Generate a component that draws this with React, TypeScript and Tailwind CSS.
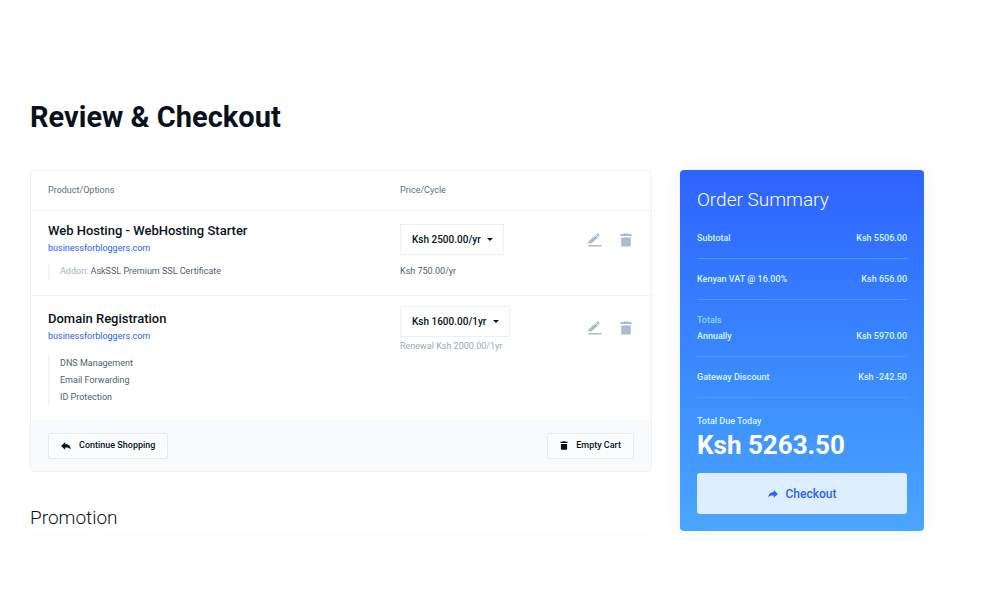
import type { ReactNode } from 'react';

interface PriceSelectProps {
  label: string;
  price: string;
}

interface SummaryRowProps {
  label: string;
  amount: string;
  caption?: string;
}

function TrashIcon({ className }: { className: string }) {
  return (
    <svg viewBox="0 0 12 14" fill="currentColor" className={className} aria-hidden="true">
      <path d="M4 0.4h4l0.6 0.7h2.9v2H0.5v-2h2.9zM1.2 4.6h9.6v8.2q0 0.7-0.7 0.7H1.9q-0.7 0-0.7-0.7z" />
    </svg>
  );
}

function PencilIcon() {
  return (
    <svg viewBox="0 0 14 14" fill="currentColor" className="size-3.5" aria-hidden="true">
      <path d="M7.6 2.2 10.1 4.6 3.4 10.6H0.3V8.5z" />
      <path d="M8.2 1.6 9.4 0.6q0.4-0.4 0.8 0l1.2 1.2q0.4 0.4 0 0.8l-0.8 1.4z" />
      <path d="M0.3 12h13.3v1.5H0.3z" />
    </svg>
  );
}

function ReplyIcon({ className = '' }: { className?: string }) {
  return (
    <svg viewBox="0 0 10 8" fill="currentColor" className={`h-2 w-2.5 ${className}`} aria-hidden="true">
      <path d="M4.2 0.1v1.8C7.9 2.1 9.6 3.9 9.7 7.4 8.5 5.9 7 5.6 4.2 5.6v2.2L0.1 3.9z" />
    </svg>
  );
}

function PriceSelect({ label, price }: PriceSelectProps) {
  return (
    <div className="relative w-fit">
      <select
        aria-label={label}
        className="block h-[31px] appearance-none border border-[#e9eff2] bg-white pr-[22px] pl-[11px] text-[10px] font-medium text-[#08121c]"
      >
        <option>{price}</option>
      </select>
      <svg
        viewBox="0 0 6 3"
        fill="currentColor"
        className="pointer-events-none absolute top-3.5 right-[11px] h-[3px] w-1.5"
        aria-hidden="true"
      >
        <path d="M0 0h6L3 3z" />
      </svg>
    </div>
  );
}

function RowActions({ name }: { name: string }) {
  return (
    <div className="flex items-center justify-end gap-[18px] text-[#a9bbce]">
      <button type="button" aria-label={`Edit ${name}`}>
        <PencilIcon />
      </button>
      <button type="button" aria-label={`Remove ${name}`}>
        <TrashIcon className="h-3.5 w-3" />
      </button>
    </div>
  );
}

function FooterButton({ icon, children }: { icon: ReactNode; children: ReactNode }) {
  return (
    <button
      type="button"
      className="flex h-[26px] items-center gap-2 rounded-xs border border-[#e6ebef] bg-[#fbfcfd] px-3 text-[9px] font-medium"
    >
      {icon}
      {children}
    </button>
  );
}

function SummaryRow({ label, amount, caption }: SummaryRowProps) {
  return (
    <div className="border-b border-[#5396ff] py-3">
      {caption && <p className="leading-4 text-[#8fd4ff]">{caption}</p>}
      <div className="flex justify-between leading-4">
        <span>{label}</span>
        <span>{amount}</span>
      </div>
    </div>
  );
}

export default function App() {
  return (
    <div className="min-h-screen bg-white pt-[99px] pr-[77px] pb-16 pl-[30px] font-['Roboto',sans-serif] text-[#08121c]">
      <h1 className="text-[29px] leading-9 font-bold">Review &amp; Checkout</h1>

      <div className="mt-[35px] flex items-start gap-7">
        <main className="min-w-0 flex-1">
          <div className="overflow-hidden rounded border border-[#edf1f3]">
            <table className="w-full table-fixed text-left">
              <thead>
                <tr className="h-[39px] border-b border-[#edf1f3] text-[9px] text-[#5c6f7b]">
                  <th className="pl-[17px] font-normal">Product/Options</th>
                  <th className="w-[164px] font-normal">Price/Cycle</th>
                  <th className="w-[87px]" aria-label="Actions" />
                </tr>
              </thead>
              <tbody className="align-top">
                <tr className="border-b border-[#f1f4f6]">
                  <td className="pt-3 pb-4 pl-[17px]">
                    <h2 className="text-[13px] leading-4 font-medium">Web Hosting - WebHosting Starter</h2>
                    <a href="#" className="block text-[9px] leading-[18px] text-[#1f5cff]">
                      businessforbloggers.com
                    </a>
                    <ul className="mt-1.5 border-l border-[#e9eff2] pl-[11px] text-[9px] leading-4 text-[#4f616d]">
                      <li>
                        <span className="text-[#a3b5bd]">Addon:</span> AskSSL Premium SSL Certificate
                      </li>
                    </ul>
                  </td>
                  <td className="pt-[13px]">
                    <PriceSelect label="Web Hosting billing cycle" price="Ksh 2500.00/yr" />
                    <p className="mt-2 text-[9px] leading-4 text-[#4f616d]">Ksh 750.00/yr</p>
                  </td>
                  <td className="pt-[22px] pr-[19px]">
                    <RowActions name="Web Hosting" />
                  </td>
                </tr>
                <tr>
                  <td className="pt-[15px] pb-3.5 pl-[17px]">
                    <h2 className="text-[13px] leading-4 font-medium">Domain Registration</h2>
                    <a href="#" className="block text-[9px] leading-[18px] text-[#1f5cff]">
                      businessforbloggers.com
                    </a>
                    <ul className="mt-2.5 border-l border-[#e9eff2] pl-[11px] text-[9px] leading-[17px] text-[#4f616d]">
                      <li>DNS Management</li>
                      <li>Email Forwarding</li>
                      <li>ID Protection</li>
                    </ul>
                  </td>
                  <td className="pt-2.5">
                    <PriceSelect label="Domain Registration billing cycle" price="Ksh 1600.00/1yr" />
                    <p className="text-[9px] leading-[18px] text-[#97abb1]">Renewal Ksh 2000.00/1yr</p>
                  </td>
                  <td className="pt-[25px] pr-[19px]">
                    <RowActions name="Domain Registration" />
                  </td>
                </tr>
              </tbody>
            </table>
            <div className="flex justify-between bg-[#f8fafc] px-[17px] pt-[13px] pb-3">
              <FooterButton icon={<ReplyIcon />}>Continue Shopping</FooterButton>
              <FooterButton icon={<TrashIcon className="h-[9px] w-2" />}>Empty Cart</FooterButton>
            </div>
          </div>

          <h2 className="mt-8 border-b border-[#fafafa] pb-0.5 text-[19px] leading-7 font-light">Promotion</h2>
        </main>

        <aside className="w-[244px] shrink-0 rounded bg-linear-to-b from-[#2f62ff] to-[#4ba6ff] px-[17px] pt-4 pb-[17px] text-[9px] font-medium text-[#d3f6ff] shadow-[0_0_20px_rgba(0,0,0,0.06)]">
          <h2 className="mb-1 text-[19px] leading-7 font-light text-white">Order Summary</h2>
          <SummaryRow label="Subtotal" amount="Ksh 5506.00" />
          <SummaryRow label="Kenyan VAT @ 16.00%" amount="Ksh 656.00" />
          <SummaryRow caption="Totals" label="Annually" amount="Ksh 5970.00" />
          <SummaryRow label="Gateway Discount" amount="Ksh -242.50" />
          <p className="mt-[15px] leading-4">Total Due Today</p>
          <p className="text-[26px] leading-8 font-bold text-white">Ksh 5263.50</p>
          <button
            type="button"
            className="mt-3 flex h-[41px] w-full items-center justify-center gap-2 rounded-[3px] bg-[#dceeff] text-[12px] font-medium text-[#2a62ff]"
          >
            <ReplyIcon className="-scale-x-100" />
            Checkout
          </button>
        </aside>
      </div>
    </div>
  );
}
